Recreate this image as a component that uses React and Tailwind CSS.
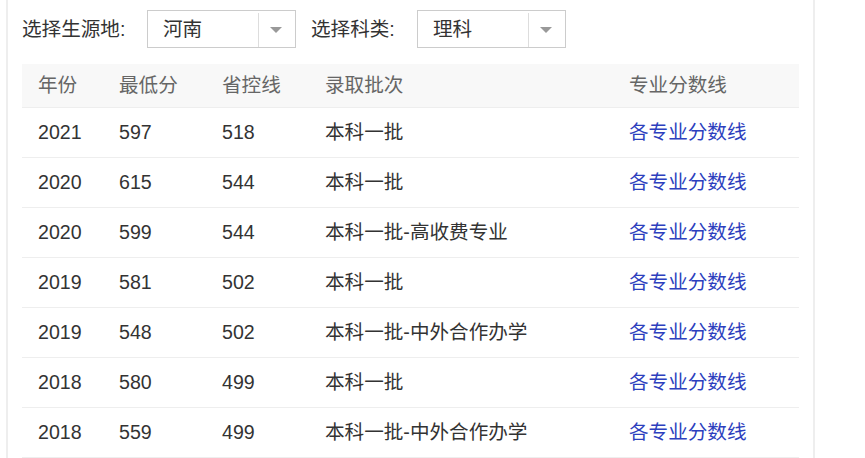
import React from "react";

const rows = [
  ["2021", "597", "518", "本科一批"],
  ["2020", "615", "544", "本科一批"],
  ["2020", "599", "544", "本科一批-高收费专业"],
  ["2019", "581", "502", "本科一批"],
  ["2019", "548", "502", "本科一批-中外合作办学"],
  ["2018", "580", "499", "本科一批"],
  ["2018", "559", "499", "本科一批-中外合作办学"],
];

// column widths taken from the screenshot
const cols = ["w-[81px]", "w-[103px]", "w-[103px]", "w-[304px]", "w-[186px]"];

const Select = ({ value }) => (
  <div className="flex w-[149px] h-[38px] border border-[#ccc] bg-white">
    <div className="flex-1 flex items-center pl-[15px] pt-[2px] text-[#333]">{value}</div>
    <div className="w-[37px] mt-[2px] border-l border-[#ddd] flex items-center justify-center">
      <span className="block w-0 h-0 border-x-[6px] border-x-transparent border-t-[6px] border-t-[#999] -ml-[2px]" />
    </div>
  </div>
);

const App = () => {
  return (
    <div
      className="bg-white min-h-screen"
      style={{ fontFamily: '"Liberation Sans", "Noto Sans CJK SC", sans-serif' }}
    >
      <div className="ml-[6px] w-[809px] h-[458px] overflow-hidden border-x-2 border-[#eee] px-[14px] pt-[10px] text-[19.6px]">
        {/* filters */}
        <div className="flex items-center h-[38px]">
          <span className="w-[125px] pt-[1px] text-[#333]">选择生源地:</span>
          <Select value="河南" />
          <span className="ml-[15px] w-[106px] pt-[1px] text-[#333]">选择科类:</span>
          <Select value="理科" />
        </div>

        {/* table */}
        <div className="mt-[16px]">
          <div className="flex h-[44px] items-center bg-[#f8f8f8] border-b border-[#eee] text-[#666]">
            {["年份", "最低分", "省控线", "录取批次", "专业分数线"].map((h, i) => (
              <div key={h} className={`${cols[i]} pl-[16px]`}>
                {h}
              </div>
            ))}
          </div>
          {rows.map((r, idx) => (
            <div key={idx} className="flex h-[50px] items-center border-b border-[#eee] text-[#333]">
              {r.map((c, i) => (
                <div key={i} className={`${cols[i]} pl-[16px]`}>
                  {c}
                </div>
              ))}
              <div className={`${cols[4]} pl-[16px]`}>
                <a href="#" className="text-[#2d3fbe]">
                  各专业分数线
                </a>
              </div>
            </div>
          ))}
        </div>
      </div>
    </div>
  );
};

export default App;
